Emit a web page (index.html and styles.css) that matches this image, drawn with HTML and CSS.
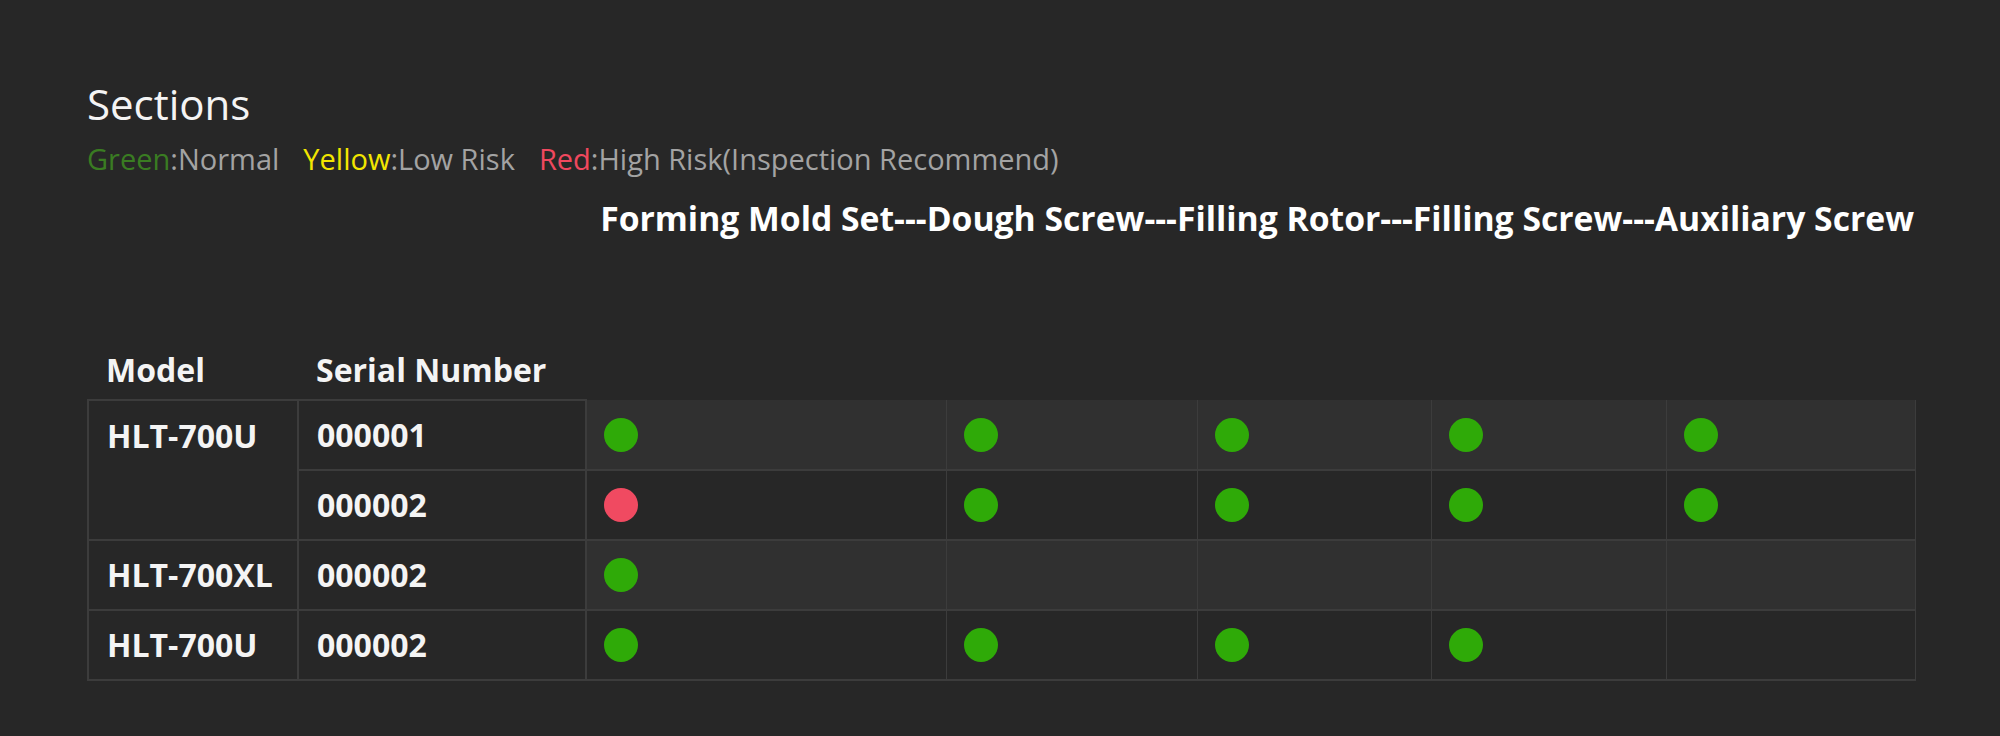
FILE: index.html
```html
<!DOCTYPE html>
<html lang="en">
<head>
    <meta charset="UTF-8">
    <meta name="viewport" content="width=device-width, initial-scale=1.0">
    <title>Sections</title>
    <link rel="stylesheet" href="styles.css">
</head>
<body>

<!-- Sections panel -->
<div class="panel">
    <h2 class="panel-title">Sections</h2>

    <!-- Colour legend -->
    <p class="legend">
        <span class="legend-item"><span class="c-green">Green</span>:Normal</span>
        <span class="legend-item"><span class="c-yellow">Yellow</span>:Low Risk</span>
        <span class="legend-item"><span class="c-red">Red</span>:High Risk(Inspection Recommend)</span>
    </p>

    <p class="parts">Forming Mold Set---Dough Screw---Filling Rotor---Filling Screw---Auxiliary Screw</p>

    <!-- Status table -->
    <table class="status-table">
        <colgroup>
            <col class="w-model">
            <col class="w-serial">
            <col class="w-mold">
            <col class="w-dough">
            <col class="w-rotor">
            <col class="w-fscrew">
            <col class="w-aux">
        </colgroup>
        <thead>
            <tr>
                <th>Model</th>
                <th>Serial Number</th>
                <th></th><th></th><th></th><th></th><th></th>
            </tr>
        </thead>
        <tbody>
            <tr class="striped">
                <td class="info model" rowspan="2">HLT-700U</td>
                <td class="info">000001</td>
                <td class="dot-cell"><span class="dot green"></span></td>
                <td class="dot-cell"><span class="dot green"></span></td>
                <td class="dot-cell"><span class="dot green"></span></td>
                <td class="dot-cell"><span class="dot green"></span></td>
                <td class="dot-cell"><span class="dot green"></span></td>
            </tr>
            <tr>
                <td class="info">000002</td>
                <td class="dot-cell"><span class="dot red"></span></td>
                <td class="dot-cell"><span class="dot green"></span></td>
                <td class="dot-cell"><span class="dot green"></span></td>
                <td class="dot-cell"><span class="dot green"></span></td>
                <td class="dot-cell"><span class="dot green"></span></td>
            </tr>
            <tr class="striped">
                <td class="info">HLT-700XL</td>
                <td class="info">000002</td>
                <td class="dot-cell"><span class="dot green"></span></td>
                <td class="dot-cell"></td>
                <td class="dot-cell"></td>
                <td class="dot-cell"></td>
                <td class="dot-cell"></td>
            </tr>
            <tr>
                <td class="info">HLT-700U</td>
                <td class="info">000002</td>
                <td class="dot-cell"><span class="dot green"></span></td>
                <td class="dot-cell"><span class="dot green"></span></td>
                <td class="dot-cell"><span class="dot green"></span></td>
                <td class="dot-cell"><span class="dot green"></span></td>
                <td class="dot-cell"></td>
            </tr>
        </tbody>
    </table>
</div>

</body>
</html>
```

FILE: styles.css
```css
body {
    font-family: "Open Sans", "Noto Sans", sans-serif;
    background-color: #272727;
    color: #f4f4f4;
    margin: 0;
    padding: 0;
}

.panel {
    padding: 79px 0 0 87px;
    width: 1827px;
}

.panel-title {
    font-size: 42px;
    font-weight: normal;
    line-height: 50px;
    margin: 0;
}

.legend {
    font-size: 29px;
    line-height: 36px;
    margin: 12px 0 0;
    color: #a3a3a3;
    display: flex;
    gap: 24px;
}

.c-green {
    color: #3a7c22;
}

.c-yellow {
    color: #f2e600;
}

.c-red {
    color: #f0485e;
}

.parts {
    font-size: 33.7px;
    font-weight: bold;
    line-height: 40px;
    margin: 21px 0 0;
    text-align: right;
    color: #ffffff;
}

.status-table {
    margin-top: 112px;
    width: 1827px;
    table-layout: fixed;
    border-collapse: collapse;
    font-size: 32px;
    font-weight: bold;
}

.w-model { width: 210px; }
.w-serial { width: 288px; }
.w-mold { width: 360px; }
.w-dough { width: 251px; }
.w-rotor { width: 234px; }
.w-fscrew { width: 235px; }
.w-aux { width: 249px; }

.status-table th {
    text-align: left;
    line-height: 40px;
    padding: 0 18px 9px;
}

.status-table td {
    height: 68px;
    padding: 0 18px;
    line-height: 40px;
}

.info {
    border: 2px solid #3c3c3c;
}

.model {
    vertical-align: top;
    padding-top: 15px !important;
}

.dot-cell {
    border-left: 1px solid #3c3c3c;
    border-right: 1px solid #3c3c3c;
    border-bottom: 2px solid #3c3c3c;
    padding-left: 17px !important;
}

.striped .dot-cell {
    background-color: #303030;
}

.dot {
    display: block;
    width: 34px;
    height: 34px;
    border-radius: 50%;
}

.dot.green {
    background-color: #2faa08;
}

.dot.red {
    background-color: #f04a61;
}
```
